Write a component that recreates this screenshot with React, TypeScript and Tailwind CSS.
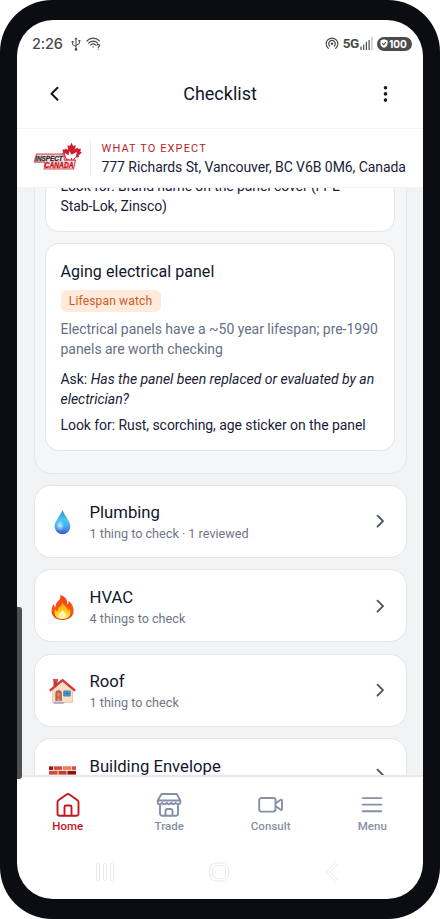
import React from "react";

function StatusBar() {
  return (
    <div className="flex h-[46px] shrink-0 items-center pl-[15px] pr-[11px] pt-[1px] text-[#4a4a4a]">
      <span className="w-[31px] font-['Inter',sans-serif] text-[14.5px] font-medium tracking-[-0.2px]">2:26</span>
      <svg className="ml-[8px]" width="10" height="14" viewBox="0 0 10 14" fill="none" stroke="currentColor" strokeWidth="1">
        <path d="M5 12V2M5 9.5 1.6 7.7V5.2M5 8.3l3.4-1.8V4.3" />
        <path d="M5 .3 6.5 2.6h-3zM.6 4h2v1.6h-2zM7.4 3h2v1.6h-2z" fill="currentColor" stroke="none" />
        <circle cx="5" cy="12.4" r="1.3" fill="currentColor" stroke="none" />
      </svg>
      <svg className="ml-[5px]" width="15" height="13" viewBox="0 0 15 13" fill="none" stroke="currentColor" strokeWidth="1.1" strokeLinecap="round">
        <path d="M.8 4.1C4.3.2 10 .2 13.4 3.9M2.6 6.2c2.6-2.8 6.600-2.800 9 0M4.600 8.200c1.500-1.500 3.600-1.500 5-.2" />
        <circle cx="7" cy="9.900" r=".7" fill="currentColor" stroke="none" />
        <path d="M10.900 8.400c.2-1.500 2.700-1.300 2.600.2-.1 1-1.300 1-1.300 2.100M12.200 12.200v.1" />
      </svg>
      <div className="flex-1" />
      <svg width="14" height="13" viewBox="0 0 14 13" fill="none" stroke="currentColor" strokeWidth="1.200" strokeLinecap="round">
        <path d="M3.400 11.400a5.800 5.800 0 1 1 7.200 0M4.700 9a3.300 3.300 0 1 1 4.600 0" />
        <circle cx="7" cy="6.800" r="1.200" fill="currentColor" stroke="none" />
      </svg>
      <span className="ml-[4px] font-['Roboto',sans-serif] text-[13.5px] font-bold tracking-[-0.3px]">5G</span>
      <svg className="ml-[1px]" width="13" height="13" viewBox="0 0 13 13" fill="currentColor">
        <path d="M.4 9.5h1.2V13H.4zM3.1 7.5h1.2V13H3.1zM5.8 5h1.2v8H5.8zM8.500 3h1.200v10H8.500z" />
        <path d="M11.300 0h1.300v13h-1.300z" opacity=".35" />
      </svg>
      <div className="ml-[4px] flex h-[14px] w-[35px] items-center rounded-full bg-[#4c4c4c] pl-[3px] text-white">
        <svg width="8" height="9" viewBox="0 0 8 9">
          <path d="M4 .3 7.600 1.500v2.900C7.600 6.600 6.100 8 4 8.800 1.900 8 .4 6.600.4 4.400V1.500z" fill="white" />
          <path d="m2.200 4.200 1.400 1.400 2.300-2.400" fill="none" stroke="#4c4c4c" strokeWidth="1.100" />
        </svg>
        <span className="ml-[1px] font-['Inter',sans-serif] text-[10px] font-bold leading-[14px]">100</span>
      </div>
    </div>
  );
}

function Logo() {
  return (
    <svg width="50" height="32" viewBox="0 0 50 32">
      <path
        d="M38.500 .8 40.200 4 42.600 2.900 42.200 7.400 44.600 5.600 45.400 7 48 6.600 47.200 9.400 48.800 10.400 45.600 13.400 46 15.200 42.600 15.600 40 20H34L31.800 15 28.600 12 30.200 10.400 29.400 7.400 32 7.600 32.800 6.400 35.200 8 34.500 3.200 36.800 4z"
        fill="#cf1f2c"
      />
      <path d="M31.500 11 35.800 13.200 36 9 38.800 12.800 43.800 9.800 43 14.500 39 18.500 33.500 16.500z" fill="#fff" />
      <path d="M38.500 16v4" stroke="#cf1f2c" strokeWidth="1.200" />
      <path d="M3.400 12.200H30.800L31.500 18.200H42.500L40.500 27H11.200L12 20.200H1.400z" fill="#f4e2e2" stroke="#d9525a" strokeWidth="1.200" strokeLinejoin="round" />
      <text x="2.200" y="18.900" textLength="27.500" lengthAdjust="spacingAndGlyphs" fontFamily="Liberation Sans, sans-serif" fontSize="7.800" fontWeight="700" fontStyle="italic" fill="#2b2b2b" stroke="#2b2b2b" strokeWidth=".3">INSPECT</text>
      <text x="11.600" y="26.100" textLength="29" lengthAdjust="spacingAndGlyphs" fontFamily="Liberation Sans, sans-serif" fontSize="8.600" fontWeight="700" fontStyle="italic" fill="#cf1424" stroke="#cf1424" strokeWidth=".4">CANADA</text>
    </svg>
  );
}

function Drop() {
  return (
    <svg width="27" height="27" viewBox="0 0 27 27">
      <defs>
        <linearGradient id="drop" x1="0" y1="0" x2="0" y2="1">
          <stop offset="0" stopColor="#1d8fc8" />
          <stop offset=".4" stopColor="#4fc3f4" />
          <stop offset=".7" stopColor="#45a7ee" />
          <stop offset="1" stopColor="#4a55c4" />
        </linearGradient>
        <radialGradient id="shine">
          <stop offset="0" stopColor="#d5f6ff" />
          <stop offset="1" stopColor="#8be0ff" stopOpacity="0" />
        </radialGradient>
      </defs>
      <path d="M13.500 1C11.800 6.400 5.600 11.800 5.600 17.600a7.900 7.600 0 0 0 15.800 0C21.400 11.800 15.200 6.400 13.500 1z" fill="url(#drop)" />
      <ellipse cx="11" cy="16.500" rx="4.500" ry="5.800" fill="url(#shine)" />
    </svg>
  );
}

function Flame() {
  return (
    <svg width="27" height="27" viewBox="0 0 27 27">
      <defs>
        <linearGradient id="flame" x1="0" y1="0" x2="0" y2="1">
          <stop offset="0" stopColor="#f0401c" />
          <stop offset=".6" stopColor="#fb5a0c" />
          <stop offset="1" stopColor="#ee2a10" />
        </linearGradient>
        <linearGradient id="core" x1="0" y1="0" x2="0" y2="1">
          <stop offset="0" stopColor="#ff9d0a" />
          <stop offset=".6" stopColor="#ffd21f" />
          <stop offset="1" stopColor="#ffe94a" />
        </linearGradient>
      </defs>
      <path d="M11 .8c4.900 1.500 7.600 4.700 7.300 9.600 1.300-.7 1.500-2.300 1.100-3.900 3.400 2.800 5.200 6.300 5.200 10C24.600 22.500 20 26 13.500 26S2.500 22.300 2.500 16.800c0-3 1-4.900 2.300-6.800.3 1.700.8 2.600 1.900 3.300C6.500 9 8.700 7.700 10.600 5.500 11.700 4.100 11.700 2.500 11 .8z" fill="url(#flame)" />
      <path d="M13.600 8c.2 3.300 5.200 4.500 5.200 8.600 1-.3 1.300-1.300 1.300-2.300 3.200 5.800.5 10.800-6.500 10.800S4.300 20.500 6.200 15.200c.6 1.500 1.400 2 2.600 2.200C8.300 13 13.500 12 13.600 8z" fill="url(#core)" />
      <path d="M13.600 15.500c.5 2.200 3.600 3.300 3.600 6.100 0 2.200-1.500 3.400-3.600 3.400s-3.800-1.200-3.800-3.400c0-2.800 3.400-3.500 3.800-6.100z" fill="#fff6b5" />
    </svg>
  );
}

function House() {
  return (
    <svg width="27" height="27" viewBox="0 0 27 27">
      <path d="M4.500 1.800h4V9h-4z" fill="#b5403a" />
      <path d="M4 1h5v2H4z" fill="#df4a4a" />
      <path d="M3.600 12 13.500 3.500 23.500 12v12.400H3.600z" fill="#fbdfc5" stroke="#e5b79c" strokeWidth=".7" />
      <path d="M1.500 12.200 13.500 2.200 25.500 12.200" fill="none" stroke="#d8333a" strokeWidth="2.300" strokeLinecap="round" strokeLinejoin="round" />
      <path d="M6.800 24.500V15.300a2.800 2.800 0 0 1 5.600 0v9.200z" fill="#c4664f" stroke="#9d4a3c" strokeWidth=".7" />
      <path d="M8.300 15.300h2.600v3H8.300zM8.300 20h2.600v3H8.300z" fill="#d98a6c" />
      <path d="M14.800 13h6.400v5h-6.400z" fill="#38b6e4" stroke="#4b6b8e" strokeWidth=".8" />
      <path d="M18 13v5M14.800 15.500h6.400" stroke="#356690" strokeWidth=".8" />
      <path d="M5.600 22.800h8v1.600h-8z" fill="#d6cfdb" />
      <path d="M4.500 24h10.300v1.900H4.500z" fill="#b5abc0" />
    </svg>
  );
}

function Bricks() {
  const rows = [3.4, 8, 12.600, 17.200];
  return (
    <svg width="27" height="27" viewBox="0 0 27 27">
      <path d="M0 3h27v19H0z" fill="#efdad3" />
      {rows.map((y, i) => (
        <g key={y}>
          <rect x="0" y={y} width={i % 2 ? 8.500 : 4} height="3.500" fill={i % 2 ? "#d5483a" : "#8c1f1d"} />
          <rect x={i % 2 ? 9.500 : 5} y={y} width="8" height="3.500" fill={i % 2 ? "#c63b31" : "#d5483a"} />
          <rect x={i % 2 ? 18.500 : 14} y={y} width={i % 2 ? 8.500 : 8} height="3.500" fill={i % 2 ? "#8c1218" : "#f07c5d"} />
          {i % 2 === 0 && <rect x="23" y={y} width="4" height="3.500" fill="#d5483a" />}
        </g>
      ))}
    </svg>
  );
}

function CategoryRow({ icon, title, detail }: { icon: React.ReactNode; title: string; detail?: string }) {
  return (
    <div className="flex h-[73px] shrink-0 items-center rounded-[17px] border border-[#e2e5ea] bg-white pl-[14.500px] pr-[16px]">
      <div className="mt-[3px] w-[27px]">{icon}</div>
      <div className="ml-[13.500px] mt-[2px] flex-1">
        <div className="text-[16.700px] leading-[24px] text-[#10172b]">{title}</div>
        <div className="h-[18px] text-[12.650px] leading-[18px] text-[#6e7686]">{detail}</div>
      </div>
      <svg width="20" height="20" viewBox="0 0 20 20" fill="none" stroke="#4b5669" strokeWidth="1.900" strokeLinecap="round" strokeLinejoin="round">
        <path d="m7.500 4.700 5.500 5.500-5.500 5.500" />
      </svg>
    </div>
  );
}

function NavItem({ icon, label, active }: { icon: React.ReactNode; label: string; active?: boolean }) {
  return (
    <div className={`flex flex-1 flex-col items-center ${active ? "text-[#c8151f]" : "text-[#8590a8]"}`}>
      <svg width="26" height="26" viewBox="0 0 26 26" fill="none" stroke="currentColor" strokeWidth="1.900" strokeLinecap="round" strokeLinejoin="round">
        {icon}
      </svg>
      <div className="mt-[1px] text-[11.500px] font-medium leading-[14px] tracking-[0.050px]">{label}</div>
    </div>
  );
}

export default function App() {
  return (
    <div className="h-[919px] w-[440px] overflow-hidden bg-white font-['Roboto',sans-serif]">
      <div className="h-[919px] w-[440px] rounded-[52px] bg-[#0b0d13] pb-[20.500px] pl-[17px] pr-[17px] pt-[20px]">
        <div className="relative flex h-[878.500px] w-[406px] flex-col overflow-hidden rounded-[36px] bg-white">
          <StatusBar />
          <header className="flex h-[63px] shrink-0 items-center border-b border-[#f3f4f6] pb-[6px] pl-[26px] pr-[26px]">
            <svg width="24" height="24" viewBox="0 0 24 24" fill="none" stroke="#10172b" strokeWidth="2" strokeLinecap="round" strokeLinejoin="round">
              <path d="M14.500 5.800 8.500 11.800l6 6" />
            </svg>
            <h1 className="flex-1 text-center text-[18px] leading-[26px] text-[#10172b]">Checklist</h1>
            <svg width="24" height="24" viewBox="0 0 24 24" fill="#10172b">
              <circle cx="12.500" cy="5.700" r="1.800" />
              <circle cx="12.500" cy="11.900" r="1.800" />
              <circle cx="12.500" cy="18.100" r="1.800" />
            </svg>
          </header>
          <section className="flex h-[59px] shrink-0 items-center border-b border-[#f0f1f4] pl-[16px]">
            <Logo />
            <div className="ml-[7px] h-[36px] w-px bg-[#eef0f3]" />
            <div className="ml-[10.500px] whitespace-nowrap pt-[1px]">
              <div className="text-[11px] leading-[18px] tracking-[1.120px] text-[#b91f2a]">WHAT TO EXPECT</div>
              <div className="text-[14px] leading-[19px] tracking-[-0.065px] text-[#1a2238]">777 Richards St, Vancouver, BC V6B 0M6, Canada</div>
            </div>
          </section>
          <main className="flex min-h-0 flex-1 flex-col gap-[11.400px] overflow-hidden bg-[#f2f3f5] pl-[16.500px] pr-[16.500px]">
            <section className="-mt-[20px] h-[305.500px] shrink-0 rounded-b-[17px] border border-[#e5e7eb] bg-[#f5f6f8] pl-[10px] pr-[11px]">
              <article className="h-[63px] rounded-b-[14px] border border-[#e2e5ea] bg-white pl-[15px] pt-[6px] text-[14px] leading-[20px] tracking-[-0.100px] text-[#1a2238]">
                <p>Look for: Brand name on the panel cover (FPE</p>
                <p>Stab-Lok, Zinsco)</p>
              </article>
              <article className="mt-[11px] h-[208px] rounded-[14px] border border-[#e2e5ea] bg-white pl-[15px] pt-[16px] text-[#1a2238]">
                <h2 className="text-[16px] leading-[24px] tracking-[0.050px] text-[#10172b]">Aging electrical panel</h2>
                <span className="mt-[6px] flex h-[22px] w-[100px] items-center justify-center rounded-[6px] bg-[#ffeadc] text-[12px] tracking-[0.150px] text-[#cb5a27]">
                  Lifespan watch
                </span>
                <p className="mt-[8px] whitespace-nowrap text-[14px] leading-[19.500px] tracking-[-0.030px] text-[#657085]">
                  Electrical panels have a ~50 year lifespan; pre-1990
                  <br />
                  panels are worth checking
                </p>
                <p className="mt-[10px] whitespace-nowrap text-[14px] leading-[20px] tracking-[-0.030px]">
                  Ask: <em>Has the panel been replaced or evaluated by an</em>
                  <br />
                  <em>electrician?</em>
                </p>
                <p className="mt-[6px] whitespace-nowrap text-[14px] leading-[20px] tracking-[-0.060px]">Look for: Rust, scorching, age sticker on the panel</p>
              </article>
            </section>
            <CategoryRow icon={<Drop />} title="Plumbing" detail="1 thing to check · 1 reviewed" />
            <CategoryRow icon={<Flame />} title="HVAC" detail="4 things to check" />
            <CategoryRow icon={<House />} title="Roof" detail="1 thing to check" />
            <CategoryRow icon={<Bricks />} title="Building Envelope" />
          </main>
          <nav className="flex h-[77px] shrink-0 border-t-2 border-[#e6e8eb] bg-white pt-[14.500px]">
            <NavItem
              active
              label="Home"
              icon={<path d="M2.500 10.300c0-.8.3-1.500 1-2l8-5.700c.9-.7 2.100-.7 3 0l8 5.700c.6.500 1 1.200 1 2v11.200a2.200 2.200 0 0 1-2.200 2.200H4.700a2.200 2.200 0 0 1-2.200-2.200zM9.500 23.500V15a1.500 1.500 0 0 1 1.500-1.500h4a1.500 1.500 0 0 1 1.500 1.500v8.500" />}
            />
            <NavItem
              label="Trade"
              icon={<path d="M5.500 2h15.200l3.600 6.500v2.300c0 1.500-3 2.200-4.600 0-1.300 2-3.300 2-4.500 0-1.300 2-3.300 2-4.500 0-1.300 2-3.300 2-4.500 0-1.500 2.200-4.500 1.500-4.500 0V8.500zM2 8.500h22M4 12.700v8.800a2.200 2.200 0 0 0 2.200 2.200h13.600a2.200 2.200 0 0 0 2.200-2.200v-8.800M9.500 23.500V19a2 2 0 0 1 2-2h3a2 2 0 0 1 2 2v4.500" />}
            />
            <NavItem label="Consult" icon={<path d="M3.500 6h11.700A2.300 2.300 0 0 1 17.500 8.300v9a2.300 2.300 0 0 1-2.300 2.300H3.500a2.300 2.300 0 0 1-2.300-2.300v-9A2.300 2.300 0 0 1 3.500 6zM17.500 11.500l5.200-3.700c.7-.4 1.300 0 1.300.7v8.600c0 .8-.7 1.200-1.300.7l-5.200-3.700" />} />
            <NavItem label="Menu" icon={<path d="M3.700 6.100h18.600M3.700 12.600h18.600M3.700 19.200h18.600" />} />
          </nav>
          <div className="flex h-[46.500px] shrink-0 items-center justify-between pb-[6px] pl-[78px] pr-[84px]">
            <svg width="20" height="20" viewBox="0 0 20 20" fill="none" stroke="#e9e9e9">
              <rect x="1.500" y="1.500" width="3" height="17" rx="1" />
              <rect x="8.500" y="1.500" width="3" height="17" rx="1" />
              <rect x="15.500" y="1.500" width="3" height="17" rx="1" />
            </svg>
            <svg className="-ml-[3px]" width="20" height="20" viewBox="0 0 20 20" fill="none" stroke="#e9e9e9">
              <rect x=".7" y="1" width="18.600" height="18" rx="6.500" />
              <rect x="3.300" y="3.600" width="13.400" height="12.800" rx="4.500" />
            </svg>
            <svg width="14" height="20" viewBox="0 0 14 20" fill="none" stroke="#e9e9e9" strokeLinejoin="round">
              <path d="M10.700 1.200 1.300 9.300v1.400l9.400 8.100 2-1.700L4.600 10l8.100-7.100z" />
            </svg>
          </div>
          <div className="absolute left-0 top-[587px] h-[172px] w-[4.500px] rounded-r-[3px] bg-[#505050]" />
        </div>
      </div>
    </div>
  );
}
